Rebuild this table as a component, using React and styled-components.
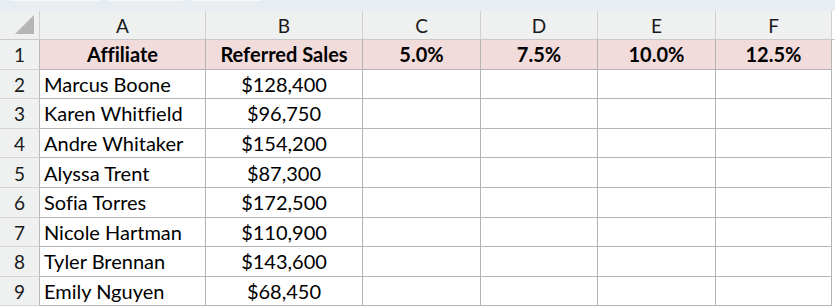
import styled, { createGlobalStyle } from 'styled-components';

const GlobalStyle = createGlobalStyle`
    html, body {
        margin: 0;
        padding: 0;
        background: #ffffff;
    }
    body {
        font-family: 'Lato', 'Liberation Sans', sans-serif;
        font-variant-ligatures: none;
    }
`;

const columns = [
    { letter: 'A', width: 166 },
    { letter: 'B', width: 157 },
    { letter: 'C', width: 118 },
    { letter: 'D', width: 117 },
    { letter: 'E', width: 118 },
    { letter: 'F', width: 116 },
];

const headings = ['Affiliate', 'Referred Sales', '5.0%', '7.5%', '10.0%', '12.5%'];

const affiliates = [
    ['Marcus Boone', '$128,400'],
    ['Karen Whitfield', '$96,750'],
    ['Andre Whitaker', '$154,200'],
    ['Alyssa Trent', '$87,300'],
    ['Sofia Torres', '$172,500'],
    ['Nicole Hartman', '$110,900'],
    ['Tyler Brennan', '$143,600'],
    ['Emily Nguyen', '$68,450'],
];

const template = `40px ${columns.map(c => `${c.width}px`).join(' ')} 1fr`;

const App = () => (
    <>
        <GlobalStyle />
        <Sheet>
            <FormulaStrip>
                <StripPiece $w={90} />
                <StripPiece $w={75} />
                <StripPiece $w={70} />
            </FormulaStrip>
            <HeaderRow>
                <Corner>
                    <svg width="20" height="20" viewBox="0 0 20 20">
                        <polygon points="19,0 19,19 0,19" fill="#b5b5b5" />
                    </svg>
                </Corner>
                {columns.map(c => <ColumnLetter key={c.letter}>{c.letter}</ColumnLetter>)}
                <Filler />
            </HeaderRow>
            <Row>
                <RowNumber>1</RowNumber>
                {headings.map(h => <TitleCell key={h}>{h}</TitleCell>)}
                <Filler />
            </Row>
            {affiliates.map(([name, sales], i) => (
                <Row key={name}>
                    <RowNumber>{i + 2}</RowNumber>
                    <Cell>{name}</Cell>
                    <Cell $align="center">{sales}</Cell>
                    <Cell />
                    <Cell />
                    <Cell />
                    <Cell />
                    <Filler />
                </Row>
            ))}
        </Sheet>
    </>
);

export default App;

const Sheet = styled.div`
    width: 835px;
    height: 307px;
    overflow: hidden;
    background: #ffffff;
    color: #000000;
`;

const FormulaStrip = styled.div`
    height: 11px;
    background: #e7edf0;
    display: flex;
    gap: 8px;
    padding-left: 10px;
    box-sizing: border-box;
`;

const StripPiece = styled.div`
    width: ${({ $w }) => $w}px;
    height: 1px;
    background: #f6f8f9;
`;

const HeaderRow = styled.div`
    display: grid;
    grid-template-columns: ${template};
    height: 29px;
    background: #eff0f0;
    border-bottom: 1px solid #c9c9c9;
    box-sizing: border-box;
`;

const Corner = styled.div`
    display: flex;
    align-items: flex-end;
    justify-content: flex-end;
    padding: 0 4px 4px 0;
    border-right: 1px solid #d0d0d0;
`;

const ColumnLetter = styled.div`
    display: flex;
    align-items: center;
    justify-content: center;
    font-size: 19px;
    color: #1a1a1a;
    border-right: 1px solid #d0d0d0;
    padding-top: 1px;
`;

const Row = styled.div`
    display: grid;
    grid-template-columns: ${template};
    height: 29.6px;
`;

const RowNumber = styled.div`
    display: flex;
    align-items: center;
    justify-content: center;
    font-size: 19px;
    color: #1a1a1a;
    background: #eff0f0;
    border-right: 1px solid #b9b9b9;
    border-bottom: 1px solid #d4d4d4;
    padding-top: 1px;
`;

const Cell = styled.div`
    display: flex;
    align-items: center;
    justify-content: ${({ $align }) => ($align === 'center' ? 'center' : 'flex-start')};
    padding: 0 4px;
    font-size: 20px;
    white-space: nowrap;
    border-right: 1px solid #b4b4b4;
    border-bottom: 1px solid #b4b4b4;
    overflow: hidden;
`;

const TitleCell = styled(Cell)`
    justify-content: center;
    font-weight: 700;
    background: #f2dcdb;
`;

const Filler = styled.div`
    background: #ffffff;
`;
